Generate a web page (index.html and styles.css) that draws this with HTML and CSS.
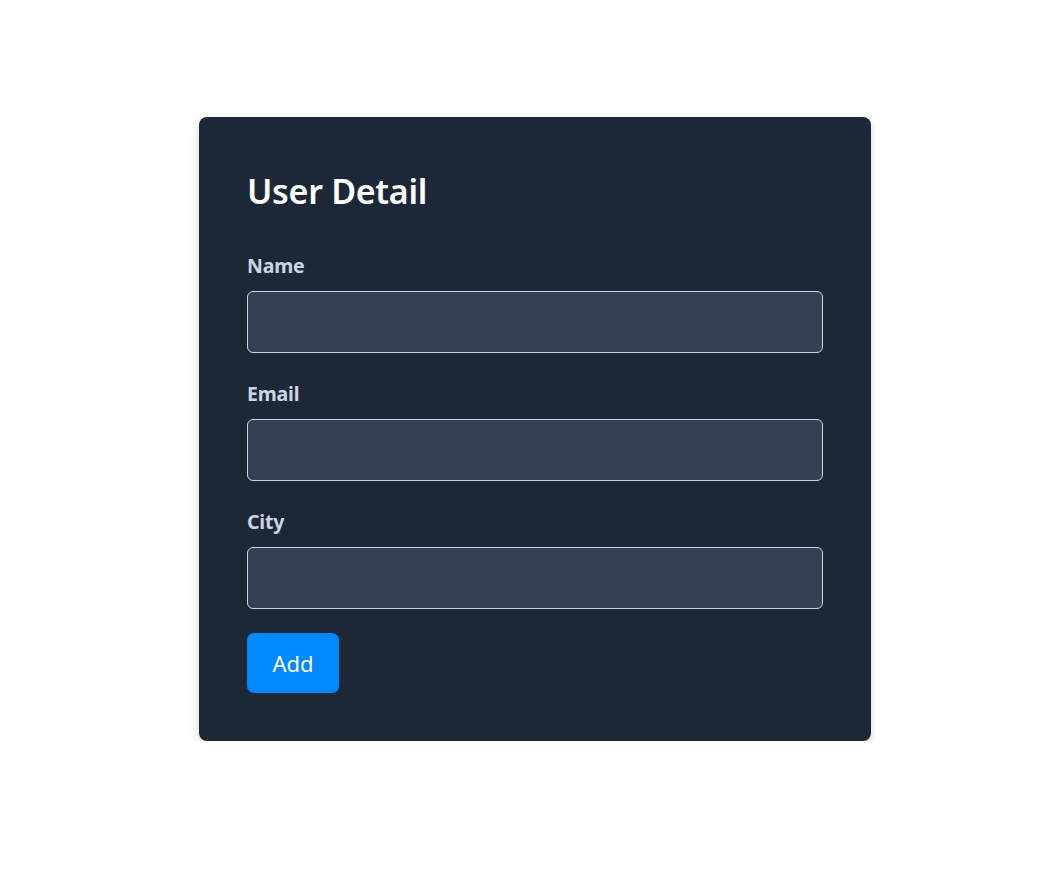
FILE: index.html
```html
<!DOCTYPE html>
<html>
<head>
<meta charset="utf-8">
<link rel="stylesheet" href="styles.css">
</head>
<body>
<div class="page">
  <form class="card">
    <h2 class="title">User Detail</h2>
    <div class="field">
      <label class="label">Name</label>
      <input class="input" type="text">
    </div>
    <div class="field">
      <label class="label">Email</label>
      <input class="input" type="text">
    </div>
    <div class="field">
      <label class="label">City</label>
      <input class="input" type="text">
    </div>
    <button class="btn" type="button">Add</button>
  </form>
</div>
</body>
</html>
```
FILE: styles.css
```css
html, body {
  margin: 0;
  padding: 0;
  background: #ffffff;
  font-family: "Noto Sans", "Open Sans", sans-serif;
}
.page {
  display: flex;
  justify-content: center;
  padding: 117px 0 0 11px;
}
.card {
  box-sizing: border-box;
  width: 672px;
  background: #1d2836;
  border-radius: 8px;
  padding: 48px;
  box-shadow: 0 4px 10px rgba(0, 0, 0, 0.16);
  display: flex;
  flex-direction: column;
}
.title {
  margin: 0 0 35px;
  padding-top: 2px;
  color: #ffffff;
  font-size: 34px;
  font-weight: 600;
  line-height: 48px;
  letter-spacing: -0.3px;
}
.field {
  display: flex;
  flex-direction: column;
  margin-bottom: 25px;
}
.field:last-of-type {
  margin-bottom: 24px;
}
.label {
  color: #cbd5e1;
  font-size: 19.5px;
  font-weight: 700;
  line-height: 27px;
  padding-top: 2px;
  margin-bottom: 12px;
  letter-spacing: -0.2px;
}
.input {
  box-sizing: border-box;
  height: 62px;
  width: 100%;
  background: #344152;
  border: 1px solid #cbd5e1;
  border-radius: 6px;
  margin: 0;
}
.btn {
  align-self: flex-start;
  width: 92px;
  height: 60px;
  background: #0088ff;
  color: #ffffff;
  border: none;
  border-radius: 7px;
  font-family: "Noto Sans", "Open Sans", sans-serif;
  font-size: 22px;
  padding: 0;
}
```
